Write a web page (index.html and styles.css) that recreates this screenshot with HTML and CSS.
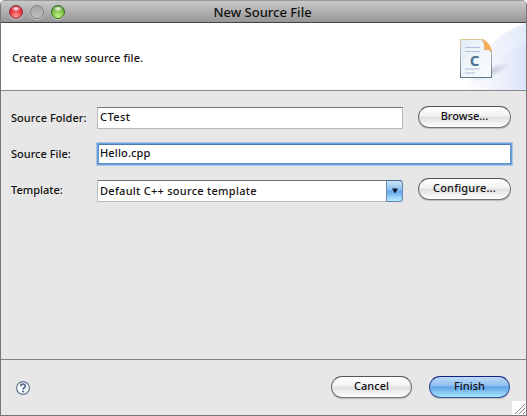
FILE: index.html
```html
<!DOCTYPE html>
<html lang="en">
<head>
<meta charset="utf-8">
<title>New Source File</title>
<link rel="stylesheet" href="styles.css">
</head>
<body>
<div class="window">
  <header class="titlebar">
    <div class="lights"><i class="light red"></i><i class="light gray"></i><i class="light green"></i></div>
    <h1><span class="t-title">New Source File</span></h1>
  </header>
  <section class="banner">
    <p><span class="t-intro">Create a new source file.</span></p>
    <svg class="art" width="125" height="67" viewBox="0 0 125 67">
      <defs>
        <linearGradient id="sky" x1="0" x2="1"><stop offset="0" stop-color="#fff"/><stop offset=".5" stop-color="#f1f4fc"/><stop offset="1" stop-color="#e3eafa"/></linearGradient>
        <linearGradient id="sky2" x1="0" x2="1"><stop offset="0" stop-color="#fff" stop-opacity="0"/><stop offset="1" stop-color="#d5def6"/></linearGradient>
        <linearGradient id="page" x1="0" y1="0" x2="1" y2="1"><stop offset="0" stop-color="#e3ecf5"/><stop offset="1" stop-color="#fafdff"/></linearGradient>
        <linearGradient id="edge" x1="0" y1="0" x2="0" y2="1"><stop offset="0" stop-color="#d9c795"/><stop offset=".4" stop-color="#a9b5bd"/><stop offset="1" stop-color="#5d7d92"/></linearGradient>
        <radialGradient id="shade"><stop offset="0" stop-color="#9b94b5" stop-opacity=".55"/><stop offset="1" stop-color="#b9b4d0" stop-opacity="0"/></radialGradient>
      </defs>
      <path d="M125 0C106 7 92 17 84 30L62 67H125Z" fill="url(#sky)"/>
      <path d="M125 22C108 26 85 41 72 67H125Z" fill="url(#sky2)" opacity=".65"/>
      <ellipse cx="89" cy="49" rx="22" ry="6" fill="url(#shade)" transform="rotate(-22 89 49)"/>
      <path d="M59.500 16.500H80L90.500 28V54.500H59.500Z" fill="url(#page)" stroke="url(#edge)"/>
      <path d="M59 54.500H91" stroke="#587b8b"/>
      <path d="M81 16C86 18 90 23 90.500 29C88 26 86 26 83.500 27C84 22 83 18 81 16Z" fill="#f4ae50" stroke="#d99a50" stroke-width=".5"/>
      <path d="M64 24.500H79M64 28.500H79M64 46H79M64 50H74" stroke="#aebedb" stroke-width="1.200"/>
      <text class="letter" x="73.500" y="42.500" text-anchor="middle">C</text>
    </svg>
  </section>
  <main class="form">
    <label><span class="t-folder">Source Folder:</span></label>
    <div class="field"><span class="t-ctest">CTest</span></div>
    <button class="btn"><span class="t-browse">Browse...</span></button>
    <label><span class="t-file">Source File:</span></label>
    <div class="field focused"><span class="t-hello">Hello.cpp</span></div>
    <label><span class="t-template">Template:</span></label>
    <div class="combo"><span class="t-default">Default C++ source template</span><b><svg width="8" height="6" viewBox="0 0 8 6"><path d="M1 .5H7L4 5.500Z" fill="#071427"/></svg></b></div>
    <button class="btn configure"><span class="t-config">Configure...</span></button>
  </main>
  <footer class="footer">
    <svg class="help" width="16" height="16" viewBox="0 0 16 16"><circle cx="8" cy="8" r="6.400" fill="#f5faff" stroke="#6a7c92" stroke-width="1.200"/><path d="M5.700 6.300C5.700 3.300 10.400 3.400 10.400 6C10.400 7.800 8 7.700 8 9.500" fill="none" stroke="#505e87" stroke-width="1.600"/><rect x="7.100" y="10.700" width="1.800" height="1.700" fill="#505e87"/></svg>
    <button class="btn"><span class="t-cancel">Cancel</span></button>
    <button class="btn primary"><span class="t-finish">Finish</span></button>
    <svg class="grip" width="14" height="14" viewBox="0 0 14 14"><path d="M0 0H14V14H0Z" fill="#fff"/><path d="M3 13L13 3M7 13L13 7M11 13L13 11" stroke="#888" stroke-width="1"/></svg>
  </footer>
</div>
</body>
</html>
```
FILE: styles.css
```css
* { box-sizing: border-box; }
body { margin: 0; background: #fff; font: 500 11px/16px "Noto Sans", "Open Sans", sans-serif; color: #111; }
.window { width: 527px; height: 416px; display: flex; flex-direction: column; border: solid #777; border-width: 0 1px 1px; border-radius: 5px 5px 0 0; background: #e7e7e7; overflow: hidden; }
.titlebar { height: 23px; display: grid; grid-template-columns: 79px 1fr 81px; align-items: center; background: linear-gradient(#c9c9c9, #969696); border-top: 1px solid #999; border-bottom: 1px solid #444; }
.titlebar h1 { margin: 0; text-align: center; font-size: 13px; line-height: 20px; font-weight: 500; }
.lights { display: flex; gap: 7px; padding: 1px 0 0 8px; }
.light { width: 14px; height: 14px; border-radius: 50%; border: 1px solid #777; box-shadow: 0 1px 0 #ccc; }
.red { border-color: #8c3036; background: radial-gradient(ellipse 5px 3px at 50% 22%, #fff, transparent), radial-gradient(circle at 50% 85%, #ff9b91, #e52b37 60%, #9d1522); }
.gray { border-color: #858585; background: linear-gradient(#a2a2a2, #c0c0c0); }
.green { border-color: #3e6c22; background: radial-gradient(ellipse 5px 3px at 50% 22%, #fff, transparent), radial-gradient(circle at 50% 85%, #c7f48e, #72b93d 60%, #31731b); }
.banner { height: 68px; display: flex; justify-content: space-between; align-items: flex-start; background: #fff; border-bottom: 1px solid #888; }
.banner p { margin: 27px 0 0 11px; }
.art { display: block; }
.letter { font: 700 15px "Noto Sans", sans-serif; fill: #4e718f; }
.form { height: 268px; padding: 15px 15px 0 10px; display: grid; grid-template-columns: 86px 306px 93px; grid-template-rows: 36px 36px 36px; align-items: start; justify-content: start; }
.form label { padding-top: 4px; white-space: nowrap; }
.field, .combo { height: 22px; margin-top: 1px; background: #fff; border: 1px solid #b9b9b9; border-top-color: #747474; padding: 2px 0 0 2px; white-space: nowrap; }
.focused { grid-column: 2 / 4; width: 413px; height: 20px; margin: 2px 0 0 1px; padding: 0 0 0 1px; border-color: #5f93ca; border-top-color: #4c7cb0; box-shadow: 0 0 0 1px #6ba0d8, 0 0 0 2px #a9c6e4; }
.btn { width: 93px; height: 22px; padding: 0; border: 1.500px solid #737373; border-top-color: #555; border-radius: 11px; background: linear-gradient(#fff, #f2f2f2 45%, #dfdfdf 50%, #fff); box-shadow: 0 1px 1px #bbb; font: inherit; line-height: 18px; color: #111; }
.form .btn { margin-left: 15px; }
.field > .t-ctest, .btn > span { transform: translateY(-1px); }
.combo { display: flex; justify-content: space-between; padding: 1px 0 0 2px; margin: 2px 0 0; border-radius: 0 4px 4px 0; }
.combo span { padding-top: 1px; }
.combo b { width: 17px; height: 22px; margin: -2px -1px 0 0; border: 1px solid #6587b4; border-top-color: #42699c; border-radius: 0 4px 4px 0; background: linear-gradient(#c9e5fa, #8cbdf0 46%, #60a3e8 50%, #b7edff); display: flex; align-items: center; justify-content: center; }
.footer { position: relative; height: 56px; display: flex; align-items: flex-start; padding: 17px 16px 0 14px; border-top: 1px solid #858585; }
.help { margin: 3px auto 0 0; }
.footer .btn { width: 81px; margin-left: 17px; margin-top: -1px; }
.footer .primary { border-color: #35559d; border-top-color: #152083; background: linear-gradient(#bcdaf7, #91c0f1 42%, #5fa2e7 50%, #a8e6ff); }
.grip { position: absolute; right: 0; bottom: 0; }
span { display: inline-block; white-space: nowrap; }
.t-intro { letter-spacing: .11px; }
.t-folder { letter-spacing: .04px; }
.t-ctest { letter-spacing: .45px; }
.t-hello { letter-spacing: .14px; }
.t-default { letter-spacing: .27px; }
.t-config { letter-spacing: .16px; }
.window .form { flex: 0 0 268px; }
```
